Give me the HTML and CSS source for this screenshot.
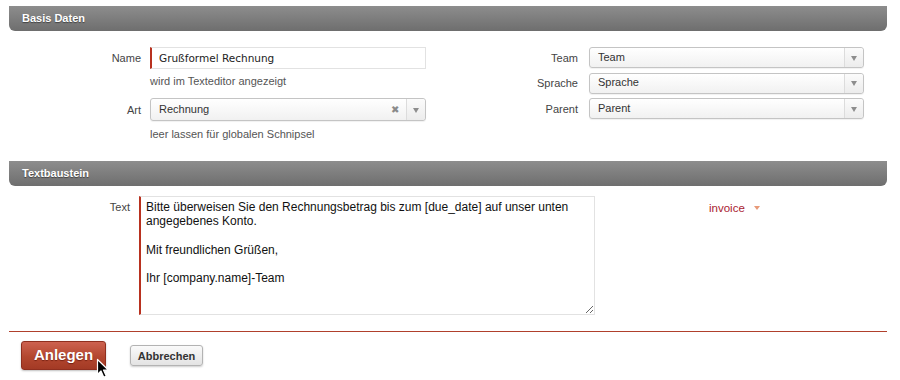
FILE: index.html
```html
<!DOCTYPE html>
<html lang="de">
<head>
<meta charset="utf-8">
<title>Textbaustein</title>
<link rel="stylesheet" href="styles.css">
</head>
<body>
<div class="page">
  <div class="section-head">Basis Daten</div>
  <div class="basis">
    <div class="grid-left">
      <label class="lbl">Name</label>
      <input class="text-input" type="text" value="Grußformel Rechnung">
      <span></span>
      <div class="hint hint-1">wird im Texteditor angezeigt</div>
      <label class="lbl">Art</label>
      <div class="select select-art">
        <span class="sel-value">Rechnung</span>
        <span class="sel-clear">✖</span>
        <span class="sel-arrow"><span class="tri"></span></span>
      </div>
      <span></span>
      <div class="hint hint-2">leer lassen für globalen Schnipsel</div>
    </div>
    <div class="grid-right">
      <label class="lbl">Team</label>
      <div class="select"><span class="sel-value">Team</span><span class="sel-arrow"><span class="tri"></span></span></div>
      <label class="lbl">Sprache</label>
      <div class="select"><span class="sel-value">Sprache</span><span class="sel-arrow"><span class="tri"></span></span></div>
      <label class="lbl">Parent</label>
      <div class="select"><span class="sel-value">Parent</span><span class="sel-arrow"><span class="tri"></span></span></div>
    </div>
  </div>
  <div class="section-head">Textbaustein</div>
  <div class="textblock">
    <label class="lbl lbl-text">Text</label>
    <textarea class="text-area">Bitte überweisen Sie den Rechnungsbetrag bis zum [due_date] auf unser unten angegebenes Konto.

Mit freundlichen Grüßen,

Ihr [company.name]-Team</textarea>
    <div class="tag">invoice <span class="tag-tri"></span></div>
  </div>
  <div class="actions">
    <button class="btn-primary" type="button">Anlegen</button>
    <button class="btn-secondary" type="button">Abbrechen</button>
  </div>
</div>
<svg class="cursor" width="14" height="21" viewBox="0 0 14 21" aria-hidden="true">
  <path d="M1.5 1.5 L1.5 16.5 L5 13 L7.8 19.2 L10.2 18.1 L7.5 12 L12.3 12 Z" fill="#000" stroke="#fff" stroke-width="1.2" stroke-linejoin="round"/>
</svg>
</body>
</html>
```

FILE: styles.css
```css
html, body {
  margin: 0;
  padding: 0;
  background: #fff;
}
body {
  font-family: "Liberation Sans", Arial, Helvetica, sans-serif;
  font-size: 11px;
  color: #444;
  width: 900px;
  height: 380px;
  position: relative;
  overflow: hidden;
}
.page {
  padding: 6px 13px 0 9px;
}
.section-head {
  height: 25px;
  line-height: 24px;
  padding-left: 13px;
  border-radius: 0 0 6px 6px;
  background: linear-gradient(#8d8d8d, #6e6e6e);
  color: #fff;
  font-weight: bold;
  font-size: 11px;
  text-shadow: 0 1px 1px rgba(0, 0, 0, 0.45);
}
.basis {
  display: flex;
  padding-top: 16px;
  margin-bottom: 20px;
}
.grid-left {
  display: grid;
  grid-template-columns: 132px 276px;
  column-gap: 9px;
  align-items: center;
}
.lbl {
  text-align: right;
  color: #444;
  font-size: 11px;
}
.text-input {
  box-sizing: border-box;
  height: 22px;
  width: 276px;
  margin: 0;
  padding: 0 0 0 7px;
  border: 1px solid #e2e2e2;
  border-left: 2px solid #b8311f;
  font-family: "DejaVu Sans", "Lucida Grande", sans-serif;
  font-size: 10.5px;
  color: #222;
  outline: none;
  background: #fff;
}
.hint {
  line-height: 13px;
  color: #555;
  font-size: 11px;
}
.hint-1 {
  padding: 6px 0 10px;
}
.hint-2 {
  padding: 7px 0 0;
}
.select {
  box-sizing: border-box;
  display: flex;
  align-items: center;
  height: 21px;
  border: 1px solid #c4c4c4;
  border-radius: 3px;
  background: linear-gradient(#ffffff, #f1f1f1);
  box-shadow: 0 1px 1px rgba(0, 0, 0, 0.06);
  color: #333;
  font-size: 11px;
}
.select-art {
  height: 23px;
}
.sel-value {
  flex: 1;
  padding-left: 8px;
  padding-bottom: 2px;
}
.sel-clear {
  width: 14px;
  color: #8a8a8a;
  font-size: 10px;
  margin-right: 4px;
  text-align: center;
}
.sel-arrow {
  align-self: stretch;
  width: 18px;
  border-left: 1px solid #dcdcdc;
  display: flex;
  align-items: center;
  justify-content: center;
  background: linear-gradient(#fbfbfb, #ececec);
  border-radius: 0 3px 3px 0;
}
.tri {
  width: 0;
  height: 0;
  border-left: 3.5px solid transparent;
  border-right: 3.5px solid transparent;
  border-top: 5px solid #8d8d8d;
  margin-top: 1px;
}
.grid-right {
  margin-left: 94px;
  display: grid;
  grid-template-columns: 58px 275px;
  column-gap: 11px;
  row-gap: 4.5px;
  align-items: center;
  align-self: start;
}
.textblock {
  display: flex;
  align-items: flex-start;
  padding-top: 10px;
}
.lbl-text {
  width: 121px;
  margin-right: 9px;
  padding-top: 5px;
  line-height: 13px;
}
.text-area {
  box-sizing: border-box;
  width: 456px;
  height: 119px;
  margin: 0;
  padding: 3px 5px;
  border: 1px solid #e2e2e2;
  border-left: 2px solid #b8311f;
  font-family: "Liberation Sans", Arial, Helvetica, sans-serif;
  font-size: 12px;
  line-height: 14.3px;
  color: #111;
  resize: both;
  outline: none;
  overflow: hidden;
}
.tag {
  margin-left: 114px;
  padding-top: 5px;
  color: #aa2230;
  font-size: 11.5px;
  line-height: 14px;
  display: flex;
  align-items: center;
}
.tag-tri {
  display: inline-block;
  width: 0;
  height: 0;
  margin-left: 9px;
  border-left: 3.5px solid transparent;
  border-right: 3.5px solid transparent;
  border-top: 4px solid #e89a78;
}
.actions {
  margin-top: 16px;
  border-top: 1px solid #b0402c;
  padding: 9px 0 0 12px;
  display: flex;
  align-items: center;
  gap: 24px;
}
.btn-primary {
  box-sizing: border-box;
  width: 85px;
  height: 29px;
  margin: 0;
  padding: 0 0 2px;
  border: 1px solid #8f2f1f;
  border-radius: 3px;
  background: linear-gradient(#cd6250, #b3472f 55%, #a33a25);
  color: #fff;
  font-family: "Liberation Sans", Arial, sans-serif;
  font-weight: bold;
  font-size: 15px;
  text-shadow: 0 1px 1px rgba(80, 10, 0, 0.6);
  box-shadow: 0 1px 2px rgba(0, 0, 0, 0.25);
}
.btn-secondary {
  box-sizing: border-box;
  width: 73px;
  height: 21px;
  margin: 0;
  padding: 0;
  border: 1px solid #b3b3b3;
  border-radius: 3px;
  background: linear-gradient(#fafafa, #e3e3e3);
  color: #333;
  font-family: "Liberation Sans", Arial, sans-serif;
  font-weight: bold;
  font-size: 11px;
  box-shadow: 0 1px 2px rgba(0, 0, 0, 0.2);
}
.cursor {
  position: absolute;
  left: 96px;
  top: 358px;
}
```
